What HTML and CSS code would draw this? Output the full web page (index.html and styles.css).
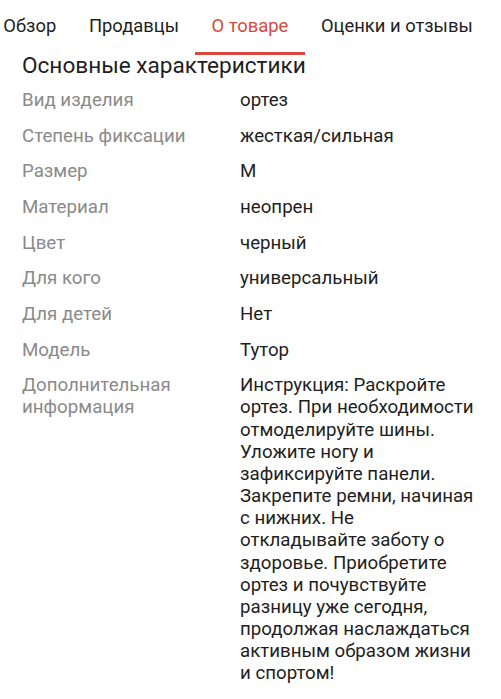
FILE: index.html
```html
<!DOCTYPE html>
<html lang="ru">
<head>
<meta charset="utf-8">
<link rel="stylesheet" href="styles.css">
</head>
<body>
<nav class="tabs-wrap">
  <div class="tabs">
    <div class="tab">Обзор</div>
    <div class="tab">Продавцы</div>
    <div class="tab active">О товаре</div>
    <div class="tab">Оценки и отзывы</div>
  </div>
</nav>
<main class="content">
  <h2 class="title">Основные характеристики</h2>
  <dl class="specs">
    <dt>Вид изделия</dt><dd>ортез</dd>
    <dt>Степень фиксации</dt><dd>жесткая/сильная</dd>
    <dt>Размер</dt><dd>M</dd>
    <dt>Материал</dt><dd>неопрен</dd>
    <dt>Цвет</dt><dd>черный</dd>
    <dt>Для кого</dt><dd>универсальный</dd>
    <dt>Для детей</dt><dd>Нет</dd>
    <dt>Модель</dt><dd>Тутор</dd>
    <dt>Дополнительная информация</dt><dd>Инструкция: Раскройте ортез. При необходимости отмоделируйте шины. Уложите ногу и зафиксируйте панели. Закрепите ремни, начиная с нижних. Не откладывайте заботу о здоровье. Приобретите ортез и почувствуйте разницу уже сегодня, продолжая наслаждаться активным образом жизни и спортом!</dd>
  </dl>
</main>
</body>
</html>
```
FILE: styles.css
```css
html, body {
  margin: 0;
  padding: 0;
  background: #ffffff;
}
body {
  font-family: Roboto, "Noto Sans", sans-serif;
  color: #1e1e1e;
  overflow: hidden;
}
.tabs-wrap {
  overflow: hidden;
}
.tabs {
  display: flex;
  margin-left: -13px;
  white-space: nowrap;
}
.tab {
  box-sizing: border-box;
  height: 55px;
  padding: 15px 16.3px 0;
  font-size: 18.4px;
  line-height: 22px;
  color: #1e1e1e;
  border-bottom: 3px solid transparent;
}
.tab.active {
  color: #d9493f;
  border-bottom-color: #d9493f;
}
.content {
  padding: 0 20px 0 22px;
}
.title {
  margin: -2px 0 0;
  font-size: 22.6px;
  line-height: 26px;
  font-weight: 400;
  color: #1e1e1e;
}
.specs {
  display: grid;
  grid-template-columns: 218px 1fr;
  row-gap: 13.5px;
  margin: 10px 0 0;
  font-size: 18.7px;
  line-height: 22.15px;
}
.specs dt {
  color: #8a8a8a;
  margin: 0;
  padding-right: 12px;
}
.specs dd {
  margin: 0;
  color: #1e1e1e;
}
```
